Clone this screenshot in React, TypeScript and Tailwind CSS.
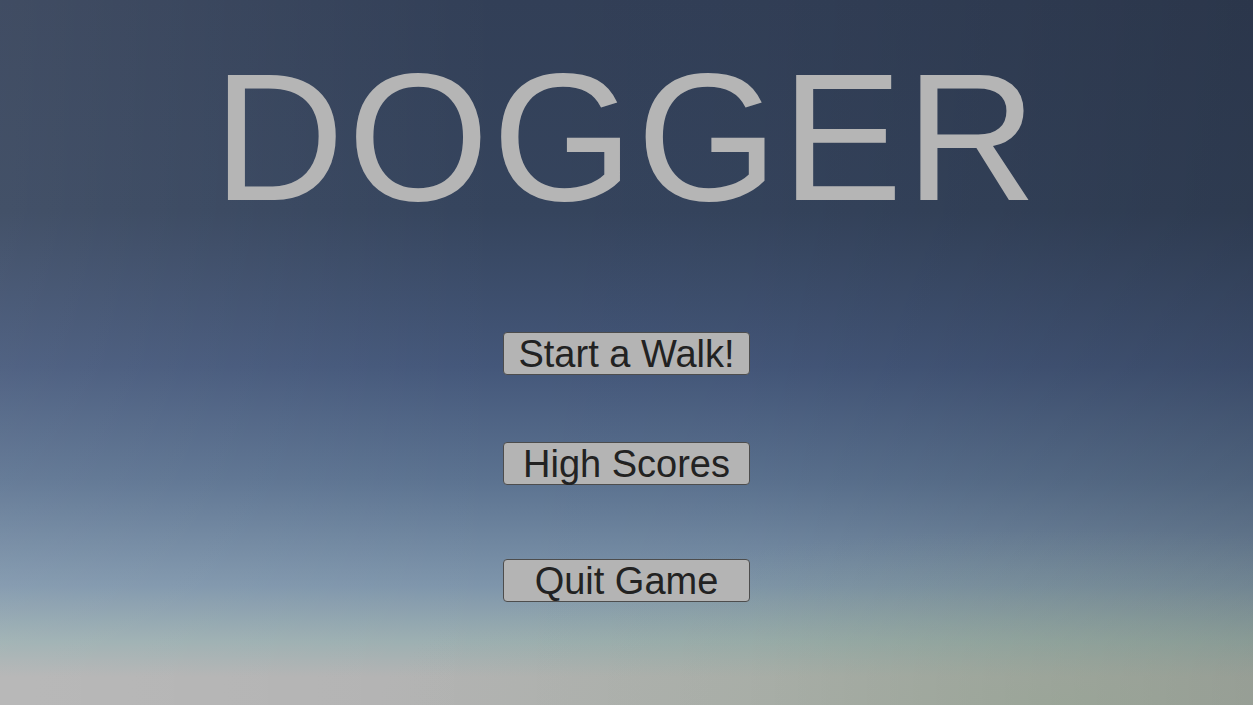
import { useState } from "react"

const menuItems = ["Start a Walk!", "High Scores", "Quit Game"]

function MenuButton({ label, onClick }: { label: string; onClick: () => void }) {
    return (
        <button
            className="w-[247px] h-[43px] flex items-center justify-center bg-[#b4b4b4] border border-[#4d4d4d] rounded-[4px] text-[38px] leading-none text-[#222222] hover:bg-[#c4c4c4]"
            onClick={onClick}
        >
            {label}
        </button>
    )
}

function App() {
    const [picked, setPicked] = useState<string>("")

    return (
        <div
            className="w-full h-[705px] overflow-hidden flex flex-col items-center font-['Liberation_Sans',Arial,sans-serif] bg-[radial-gradient(ellipse_55%_25%_at_85%_100%,rgba(145,168,140,0.45),rgba(145,168,140,0)),linear-gradient(to_right,rgba(255,255,255,0.07),rgba(255,255,255,0)_40%,rgba(0,0,0,0.02)_60%,rgba(0,0,0,0.14)),linear-gradient(to_bottom,#323f57_0%,#35445d_30%,#44577a_52%,#5b7290_68%,#7e95ab_83%,#9cafb1_91%,#b3b3b3_96%,#b3b3b3_100%)]"
            data-picked={picked}
        >
            <h1 className="mt-[46px] text-[182px] leading-none text-[#b5b5b5] tracking-[3px]">DOGGER</h1>
            <div className="mt-[104px] flex flex-col items-center">
                <MenuButton label={menuItems[0]} onClick={() => setPicked(menuItems[0])} />
                <div className="mt-[67px]">
                    <MenuButton label={menuItems[1]} onClick={() => setPicked(menuItems[1])} />
                </div>
                <div className="mt-[74px]">
                    <MenuButton label={menuItems[2]} onClick={() => setPicked(menuItems[2])} />
                </div>
            </div>
        </div>
    )
}

export default App
